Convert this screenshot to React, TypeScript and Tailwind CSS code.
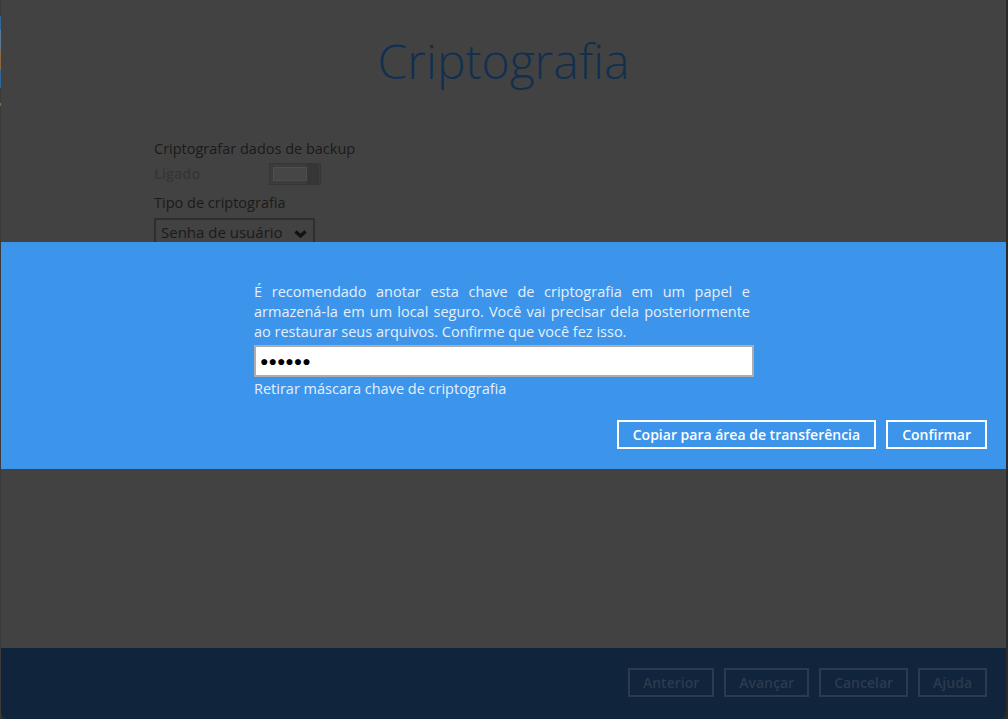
import React from 'react';

const FooterButton = ({ label }: { label: string }) => (
  <button className="h-[29px] px-[13px] border-2 border-[#2b3b4d] text-[#2b3b4d] text-[14px] font-semibold leading-none">
    {label}
  </button>
);

const App = () => {
  return (
    <div className="w-[1008px] h-[719px] bg-[#2b2b2b] flex" style={{ fontFamily: '"Open Sans", "Liberation Sans", sans-serif' }}>
      {/* desktop peeking through on the left edge */}
      <div className="w-[1px] flex flex-col bg-[#3a3a3a]">
        <div className="h-[16px]" />
        <div className="h-[14px] bg-[#2f6a9a]" />
        <div className="h-[20px] bg-[#5d7a92]" />
        <div className="h-[20px] bg-[#8a6a3c]" />
        <div className="h-[18px] bg-[#2f6a9a]" />
        <div className="h-[15px]" />
        <div className="h-[3px] bg-[#8a6a3c]" />
      </div>

      <div className="w-[1005px] h-[719px] flex flex-col bg-[#424242] rounded-b-[6px] overflow-hidden">
        <div className="flex-1 flex flex-col">
          <h1 className="pt-[37px] text-center text-[48px] leading-none font-light text-[#11304f]">Criptografia</h1>

          <div className="pl-[153px] pt-[54px] text-[14.5px] text-[#1a1a1a]">
            <div className="leading-[20px]">Criptografar dados de backup</div>
            <div className="flex items-center mt-[4px] h-[22px]">
              <span className="w-[115px] font-semibold text-[#363636]">Ligado</span>
              <div className="w-[52px] h-[22px] border border-[#363636] bg-[#3c3c3c] flex items-center p-[3px]">
                <div className="w-[34px] h-[14px] border border-[#4e4e4e] bg-[#464646]" />
                <div className="flex-1 h-[20px] -mr-[2px] bg-[#363636]" />
              </div>
            </div>
            <div className="mt-[8px] leading-[20px]">Tipo de criptografia</div>
            <div className="mt-[5px] w-[161px] h-[24px] border-2 border-b-0 border-[#2e2e2e] flex items-end justify-between pl-[5px] pr-[6px]">
              <span className="text-[15px] leading-[20px]">Senha de usuário</span>
              <svg width="13" height="8" viewBox="0 0 13 8" className="mb-[4px]">
                <path d="M1.5 1.5 L6.5 6 L11.5 1.5" stroke="#111" strokeWidth="3.2" fill="none" />
              </svg>
            </div>
          </div>

          <div className="w-[1005px] h-[227px] bg-[#3c95ea] pt-[40px] pr-[19px]">
            <div className="w-[496px] ml-[253px] text-[14.5px] leading-[20px] text-[#e6effb]">
              <p className="text-justify">
                É recomendado anotar esta chave de criptografia em um papel e armazená‑la em um local seguro. Você vai precisar dela posteriormente ao restaurar seus arquivos. Confirme que você fez isso.
              </p>
              <div className="mt-[3px] w-[500px] h-[32px] border-2 border-[#adadad] bg-white flex items-center px-[4px] text-black text-[14px]">
                ●●●●●●
              </div>
              <div className="mt-[2px]">Retirar máscara chave de criptografia</div>
            </div>
            <div className="flex justify-end gap-[10px] mt-[21px]">
              <button className="h-[29px] px-[14px] border-2 border-white text-white text-[14px] font-semibold leading-none">
                Copiar para área de transferência
              </button>
              <button className="h-[29px] px-[14px] border-2 border-white text-white text-[14px] font-semibold leading-none">
                Confirmar
              </button>
            </div>
          </div>

          <div className="flex-1" />
        </div>

        <div className="h-[71px] bg-[#10243c] flex items-start justify-end gap-[10px] pt-[20px] pr-[19px]">
          <FooterButton label="Anterior" />
          <FooterButton label="Avançar" />
          <FooterButton label="Cancelar" />
          <FooterButton label="Ajuda" />
        </div>
      </div>
    </div>
  );
};

export default App;
